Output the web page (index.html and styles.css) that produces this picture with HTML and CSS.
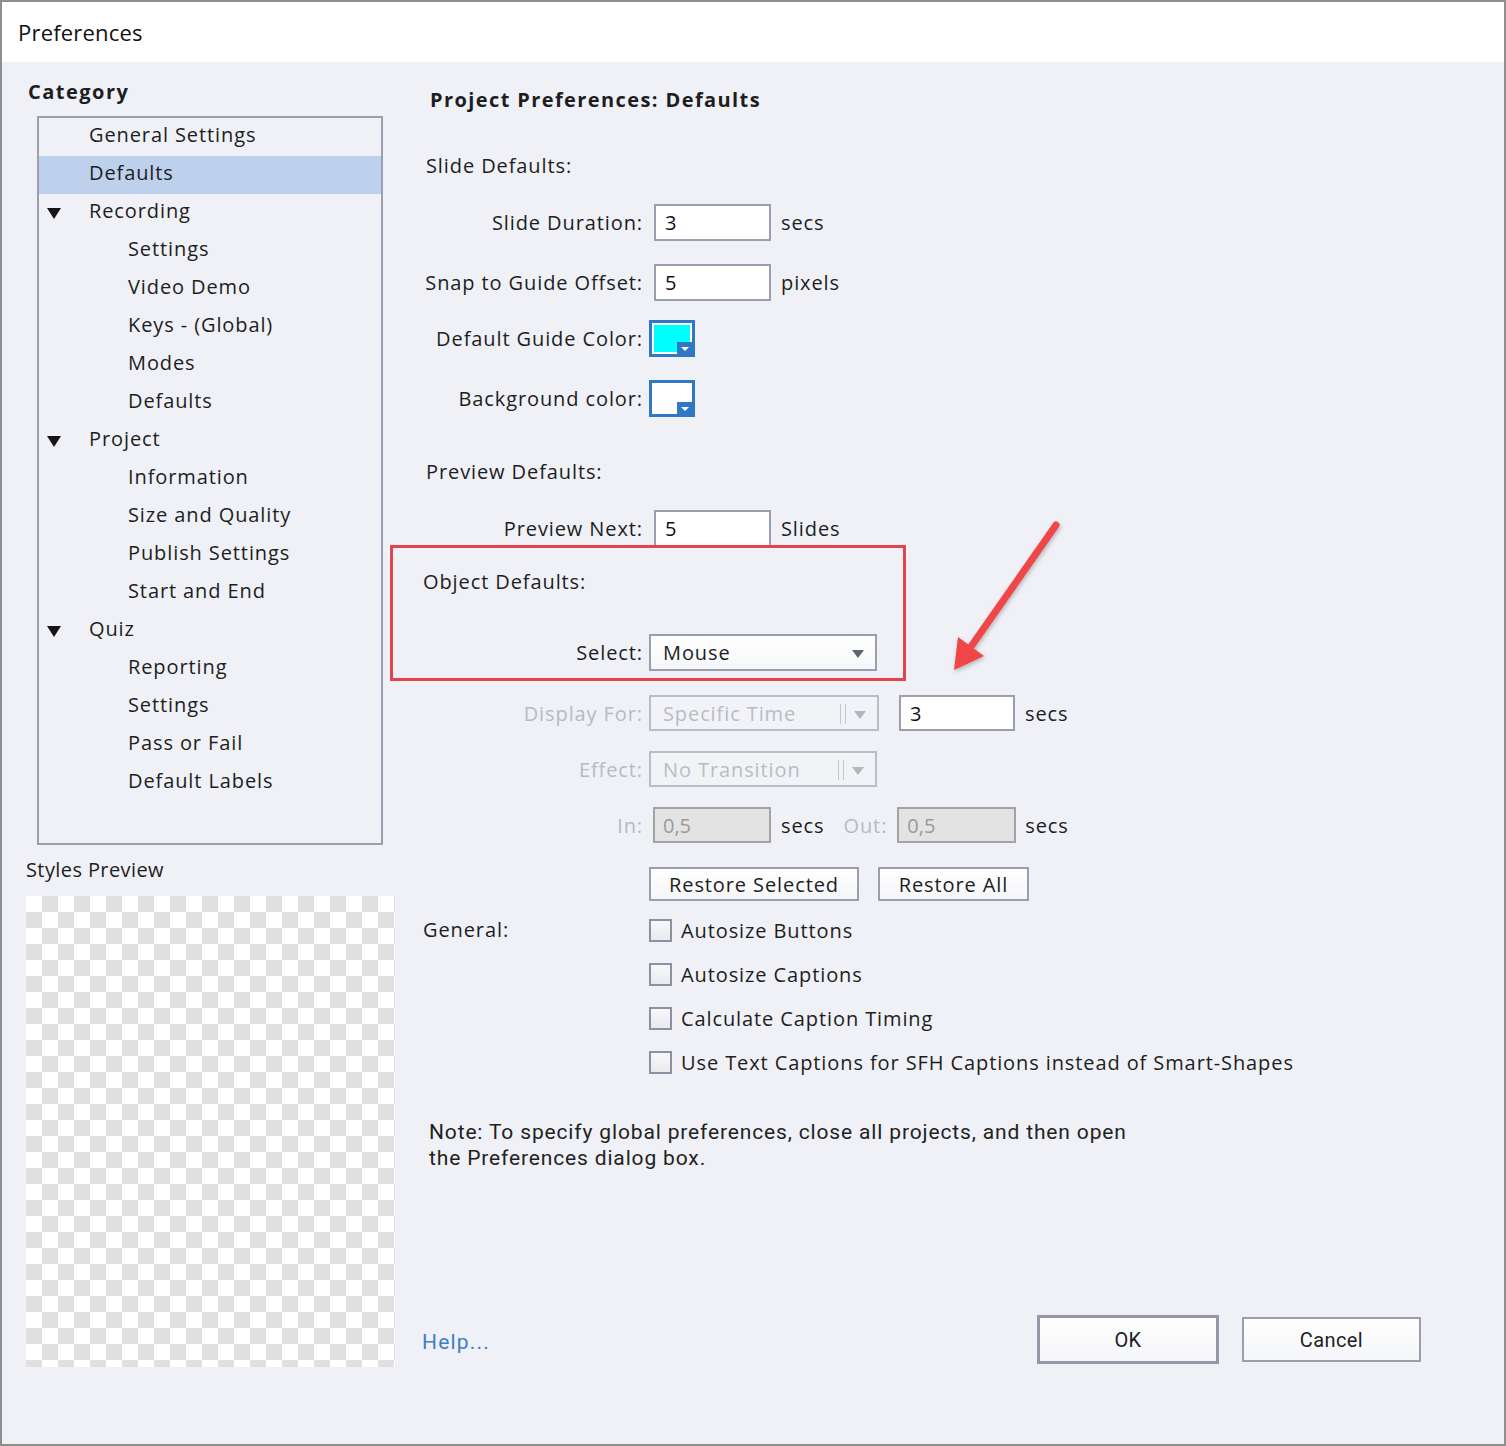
FILE: index.html
```html
<!DOCTYPE html>
<html lang="en">
<head>
  <meta charset="UTF-8" />
  <meta name="viewport" content="width=device-width, initial-scale=1.0"/>
  <title>Preferences</title>
  <link rel="stylesheet" href="styles.css">
</head>
<body>
  <div class="window">
    <div class="titlebar">Preferences</div>

    <div class="content">
      <!-- Category tree + preview -->
      <div class="sidebar">
        <div class="side-title">Category</div>
        <div class="tree">
          <div class="node">General Settings</div>
          <div class="node selected">Defaults</div>
          <div class="node open">Recording</div>
          <div class="node child">Settings</div>
          <div class="node child">Video Demo</div>
          <div class="node child">Keys - (Global)</div>
          <div class="node child">Modes</div>
          <div class="node child">Defaults</div>
          <div class="node open">Project</div>
          <div class="node child">Information</div>
          <div class="node child">Size and Quality</div>
          <div class="node child">Publish Settings</div>
          <div class="node child">Start and End</div>
          <div class="node open">Quiz</div>
          <div class="node child">Reporting</div>
          <div class="node child">Settings</div>
          <div class="node child">Pass or Fail</div>
          <div class="node child">Default Labels</div>
        </div>
        <div class="preview-label">Styles Preview</div>
        <div class="checker"></div>
      </div>

      <!-- Defaults page -->
      <div class="page">
        <h2>Project Preferences: Defaults</h2>

        <div class="section s-slide">Slide Defaults:</div>
        <div class="row r-duration">
          <label>Slide Duration:</label>
          <input class="field" type="text" value="3">
          <span class="unit">secs</span>
        </div>
        <div class="row r-snap">
          <label>Snap to Guide Offset:</label>
          <input class="field" type="text" value="5">
          <span class="unit">pixels</span>
        </div>
        <div class="row r-guide">
          <label>Default Guide Color:</label>
          <span class="swatch"><span class="fill cyan"></span></span>
        </div>
        <div class="row r-bg">
          <label>Background color:</label>
          <span class="swatch"><span class="fill"></span></span>
        </div>

        <div class="section s-preview">Preview Defaults:</div>
        <div class="row r-next">
          <label>Preview Next:</label>
          <input class="field" type="text" value="5">
          <span class="unit">Slides</span>
        </div>

        <div class="object-box">
          <div class="section">Object Defaults:</div>
          <div class="row r-select">
            <label>Select:</label>
            <div class="select">Mouse</div>
          </div>
        </div>

        <div class="row r-display disabled">
          <label>Display For:</label>
          <div class="select off wide">Specific Time</div>
          <input class="field secs" type="text" value="3">
          <span class="unit on">secs</span>
        </div>
        <div class="row r-effect disabled">
          <label>Effect:</label>
          <div class="select off">No Transition</div>
        </div>
        <div class="row r-inout disabled">
          <label>In:</label>
          <input class="field gray" type="text" value="0,5" disabled>
          <span class="unit on">secs</span>
          <span class="out-label">Out:</span>
          <input class="field gray out" type="text" value="0,5" disabled>
          <span class="unit on">secs</span>
        </div>

        <div class="row r-restore">
          <button class="btn restore-sel">Restore Selected</button>
          <button class="btn restore-all">Restore All</button>
        </div>

        <div class="general">
          <div class="general-label">General:</div>
          <div class="checks">
            <div class="check-row"><span class="check"></span>Autosize Buttons</div>
            <div class="check-row"><span class="check"></span>Autosize Captions</div>
            <div class="check-row"><span class="check"></span>Calculate Caption Timing</div>
            <div class="check-row"><span class="check"></span>Use Text Captions for SFH Captions instead of Smart-Shapes</div>
          </div>
        </div>

        <p class="note">Note: To specify global preferences, close all projects, and then open<br>the Preferences dialog box.</p>

        <div class="footer">
          <a class="help" href="#">Help...</a>
          <button class="btn ok">OK</button>
          <button class="btn cancel">Cancel</button>
        </div>
      </div>
    </div>

    <!-- red callout arrow -->
    <svg class="arrow" width="140" height="170" viewBox="0 0 140 170">
      <line x1="116" y1="15" x2="30" y2="138" stroke="#f04647" stroke-width="7" stroke-linecap="round"/>
      <polygon points="14,160 18,127 44,146" fill="#f04647"/>
    </svg>
  </div>
</body>
</html>
```

FILE: styles.css
```css
* { box-sizing: border-box; }

body {
  margin: 0;
  font-family: "Open Sans", "Noto Sans", sans-serif;
  font-size: 20px;
  letter-spacing: 0.9px;
  color: #1d1d22;
  background: #fff;
}

.window {
  position: relative;
  width: 1506px;
  height: 1446px;
  border: 2px solid #8e8e8e;
  background: #eff1f6;
  display: flex;
  flex-direction: column;
}

.titlebar {
  height: 60px;
  background: #fff;
  padding-left: 16px;
  display: flex;
  align-items: center;
  font-size: 22px;
  letter-spacing: 0.2px;
  color: #111;
}

.content {
  flex: 1;
  display: flex;
}

/* Left column */
.sidebar {
  width: 394px;
  flex: none;
  padding: 16px 0 0 24px;
}

.side-title {
  font-weight: bold;
  line-height: 28px;
  padding-left: 2px;
  letter-spacing: 1.5px;
}

.tree {
  margin: 10px 0 0 11px;
  width: 346px;
  height: 729px;
  border: 2px solid #9d9fb1;
}

.node {
  position: relative;
  height: 38px;
  line-height: 33px;
  padding-left: 50px;
}

.node.child { padding-left: 89px; }

.node.selected { background: #bdd0ec; }

.node.open::before {
  content: "";
  position: absolute;
  left: 8px;
  top: 14px;
  border-left: 7px solid transparent;
  border-right: 7px solid transparent;
  border-top: 11px solid #151515;
}

.preview-label {
  margin-top: 11px;
  line-height: 28px;
  letter-spacing: 0.4px;
}

.checker {
  margin-top: 12px;
  width: 369px;
  height: 471px;
  background: repeating-conic-gradient(#e0e0e0 0 25%, #fff 0 50%) 0 0 / 32px 32px;
}

/* Right column */
.page {
  flex: 1;
  display: flex;
  flex-direction: column;
  padding: 24px 83px 0 26px;
}

h2 {
  margin: 0;
  font-size: 20px;
  line-height: 28px;
  padding-left: 8px;
  letter-spacing: 1.4px;
}

.section {
  line-height: 28px;
  padding-left: 4px;
}

.s-slide { margin-top: 38px; }
.s-preview { margin-top: 41px; }

.row {
  display: flex;
  align-items: center;
  height: 37px;
}

.row label {
  width: 221px;
  flex: none;
  text-align: right;
}

.r-duration { margin-top: 24px; }
.r-snap { margin-top: 23px; }
.r-guide { margin-top: 19px; }
.r-bg { margin-top: 23px; }
.r-next { margin-top: 24px; }

.field {
  margin-left: 11px;
  width: 117px;
  height: 37px;
  border: 2px solid #9c9eae;
  background: #fff;
  font: inherit;
  color: #111;
  padding: 0 9px;
  outline: none;
}

.unit { margin-left: 10px; }

.swatch {
  position: relative;
  margin-left: 6px;
  width: 46px;
  height: 37px;
  border: 3px solid #2f78c4;
  background: #fff;
  padding: 2px;
}

.swatch .fill {
  display: block;
  width: 100%;
  height: 100%;
  background: #fff;
}

.swatch .fill.cyan { background: #00ffff; }

.swatch::after {
  content: "";
  position: absolute;
  right: -1px;
  bottom: -1px;
  width: 16px;
  height: 13px;
  background: #2f78c4;
}

.swatch::before {
  content: "";
  position: absolute;
  right: 3px;
  bottom: 3px;
  z-index: 1;
  border-left: 4px solid transparent;
  border-right: 4px solid transparent;
  border-top: 4px solid #fff;
}

.object-box {
  margin: -2px 0 0 -32px;
  width: 516px;
  border: 3px solid #e0474c;
  padding: 20px 0 7px 30px;
}

.object-box .section { padding-left: 0; }

.r-select { margin-top: 38px; }
.r-select label { width: 220px; }

.select {
  position: relative;
  margin-left: 6px;
  width: 228px;
  height: 37px;
  border: 2px solid #9c9eae;
  background: linear-gradient(#fff, #f6f7fa);
  padding-left: 12px;
  display: flex;
  align-items: center;
}

.select::after {
  content: "";
  position: absolute;
  right: 11px;
  top: 14px;
  border-left: 6px solid transparent;
  border-right: 6px solid transparent;
  border-top: 8px solid #5d6373;
}

.select.off {
  height: 36px;
  border-color: #babcc6;
  background: #f2f3f7;
  color: #b9bcc4;
}

.select.off.wide { width: 230px; }

.select.off::before {
  content: "";
  position: absolute;
  right: 31px;
  top: 7px;
  width: 4px;
  height: 20px;
  border-left: 1px solid #c4c6ce;
  border-right: 1px solid #c4c6ce;
}

.select.off::after {
  top: 14px;
  border-top-color: #b3b6c0;
}

.disabled label,
.out-label { color: #b7bac3; }

.unit.on { color: #1d1d22; }

.r-display { margin-top: 14px; height: 36px; }
.r-effect { margin-top: 20px; height: 36px; }
.r-inout { margin-top: 20px; height: 36px; }

.field.secs {
  margin-left: 20px;
  width: 116px;
  height: 36px;
}

.field.gray {
  margin-left: 10px;
  width: 118px;
  height: 36px;
  background: #e3e3e3;
  border-color: #a3a3a3;
  color: #9a9a9a;
  padding-left: 8px;
}

.field.gray.out { width: 119px; }

.out-label { margin-left: 19px; }

.r-inout .unit:last-child { margin-left: 9px; }

.btn {
  font: inherit;
  letter-spacing: inherit;
  color: #1d1d22;
  border: 2px solid #9c9eae;
  background: linear-gradient(#fff, #f5f6f9);
  cursor: pointer;
  padding: 0;
}

.r-restore {
  margin-top: 24px;
  height: 34px;
  padding-left: 227px;
}

.restore-sel { width: 210px; height: 34px; }
.restore-all { width: 151px; height: 34px; margin-left: 19px; }

.general {
  display: flex;
  margin-top: 7px;
}

.general-label {
  width: 227px;
  flex: none;
  line-height: 44px;
  padding-left: 1px;
}

.check-row {
  display: flex;
  align-items: center;
  height: 44px;
}

.check {
  width: 23px;
  height: 23px;
  margin-right: 9px;
  border: 2px solid #8d90a0;
  background: linear-gradient(#f8f8fa, #e9eaee);
}

.note {
  margin: 35px 0 0;
  padding-left: 7px;
  font-family: Roboto, "Open Sans", sans-serif;
  font-size: 21px;
  line-height: 26px;
  letter-spacing: 0.85px;
  color: #222;
}

.footer {
  margin-top: auto;
  padding-bottom: 80px;
  display: flex;
  align-items: center;
}

.help {
  font-family: Roboto, "Open Sans", sans-serif;
  font-size: 21px;
  color: #3d7fc6;
  text-decoration: none;
  letter-spacing: 1.2px;
  margin-right: auto;
  padding-top: 4px;
}

.ok, .cancel {
  font-family: Roboto, "Open Sans", sans-serif;
  letter-spacing: 0.4px;
}

.ok {
  width: 182px;
  height: 49px;
  border: 3px solid #9397a8;
}

.cancel {
  width: 179px;
  height: 45px;
  margin-left: 23px;
}

.arrow {
  position: absolute;
  left: 938px;
  top: 508px;
  filter: drop-shadow(1px 2px 2px rgba(0,0,0,0.25));
}
```
